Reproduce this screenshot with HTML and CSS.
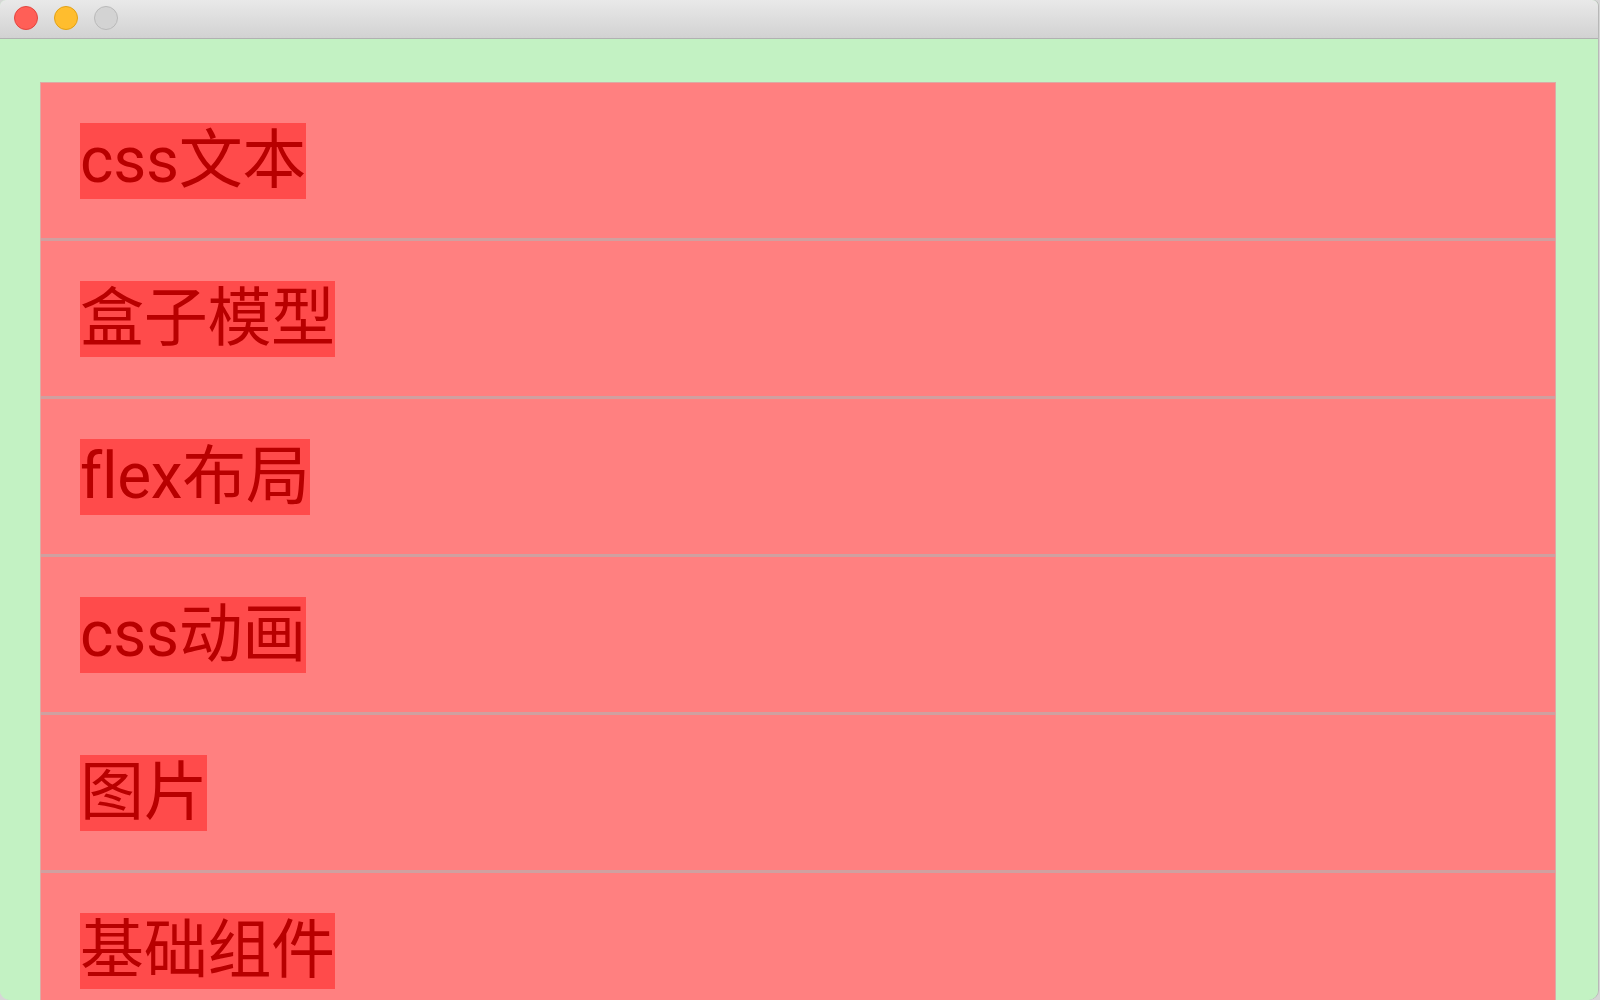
FILE: index.html
```html
<!DOCTYPE html>
<html lang="zh-CN">
<head>
<meta charset="utf-8">
<title>list</title>
<link rel="stylesheet" href="styles.css">
</head>
<body>
<div class="window">
  <div class="titlebar">
    <span class="light light-close"></span>
    <span class="light light-min"></span>
    <span class="light light-max"></span>
  </div>
  <div class="content">
    <div class="list">
      <div class="row"><span class="label">css文本</span></div>
      <div class="row"><span class="label">盒子模型</span></div>
      <div class="row"><span class="label">flex布局</span></div>
      <div class="row"><span class="label">css动画</span></div>
      <div class="row"><span class="label">图片</span></div>
      <div class="row"><span class="label">基础组件</span></div>
    </div>
  </div>
</div>
</body>
</html>
```

FILE: styles.css
```css
html, body {
  margin: 0;
  padding: 0;
  height: 100%;
  overflow: hidden;
  background: #d6d6d6;
}

.window {
  width: 1598px;
  height: 1000px;
  display: flex;
  flex-direction: column;
  border-radius: 6px 6px 10px 10px;
  overflow: hidden;
  background: #c3f2c3;
  box-shadow: 1px 0 0 #b8b8b8;
}

.titlebar {
  height: 38px;
  flex: none;
  display: flex;
  align-items: center;
  gap: 16px;
  padding-left: 14px;
  background: linear-gradient(#e9e9e9, #d2d2d2);
  border-bottom: 1px solid #b1b1b1;
  box-sizing: content-box;
}

.light {
  width: 22px;
  height: 22px;
  border-radius: 50%;
  border: 1px solid transparent;
  margin-top: -2px;
}

.light-close {
  background: #ff5f57;
  border-color: #e2463f;
}

.light-min {
  background: #ffbd2e;
  border-color: #e1a116;
}

.light-max {
  background: #d3d3d3;
  border-color: #b9b9b9;
}

.content {
  flex: 1;
  min-height: 0;
  overflow: hidden;
  padding: 43px 42px 0 40px;
  background: #c3f2c3;
}

.list {
  border: 1px solid #dcaaa4;
  border-bottom: none;
  background: #ff8080;
}

.row {
  padding: 40px 40px 39px 39px;
  border-bottom: 3px solid #cfa0a0;
  background: #ff8080;
}

.label {
  display: inline-block;
  vertical-align: top;
  height: 76px;
  line-height: 76px;
  font-family: Roboto, "Noto Sans CJK SC", sans-serif;
  font-size: 64px;
  font-variant-ligatures: none;
  letter-spacing: -0.3px;
  color: #b80000;
  background: #ff4b4b;
}
```
